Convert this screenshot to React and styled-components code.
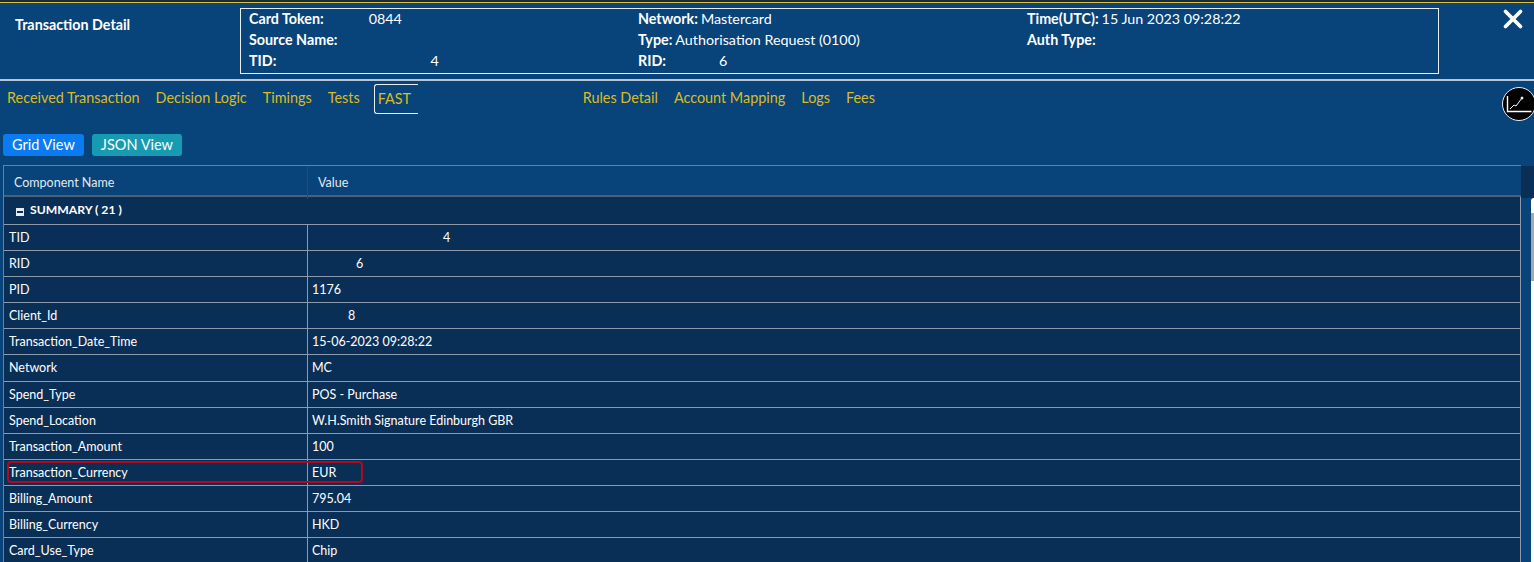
import React from "react";
import styled, { createGlobalStyle } from "styled-components";
import { X } from "lucide-react";

const GlobalStyle = createGlobalStyle`
  html, body {
    margin: 0;
    height: 100%;
    overflow: hidden;
    background: #08437a;
  }

  * {
    box-sizing: border-box;
  }
`;

const Page = styled.div`
  width: 1534px;
  height: 562px;
  overflow: hidden;
  background: #08437a;
  color: #ffffff;
  font-family: "Lato", "Open Sans", sans-serif;
`;

const TopStrip = styled.div`
  height: 3px;
  background: #1a2a3a;
  border-bottom: 1px solid #d9c23a;
`;

const Header = styled.header`
  height: 78px;
  display: flex;
  align-items: flex-start;
  padding: 5px 0 0 15px;
  border-bottom: 2px solid #b9c6d6;
`;

const Title = styled.h1`
  width: 225px;
  margin: 8px 0 0;
  font-size: 14.3px;
  font-weight: 700;
`;

const InfoBox = styled.div`
  width: 1199px;
  height: 66px;
  padding: 0 0 0 8px;
  border: 1px solid #e8eef4;
  display: grid;
  grid-template-columns: repeat(3, 389px);
  grid-auto-rows: 21px;
  font-size: 14.3px;
  line-height: 19px;
`;

const InfoItem = styled.div`
  white-space: nowrap;

  b {
    font-weight: 700;
  }
`;

const InfoValue = styled.span`
  padding-left: ${(p) => p.$gap || 3}px;
`;

const CloseButton = styled.button`
  margin: -2px 0 0 auto;
  width: 40px;
  height: 26px;
  padding: 0 3px 0 0;
  background: none;
  border: none;
  color: #ffffff;
  display: flex;
  justify-content: center;
  align-items: center;
`;

const Nav = styled.nav`
  height: 53px;
  display: flex;
  align-items: flex-start;
  padding: 3px 0 0 7px;
  position: relative;
`;

const Tab = styled.a`
  height: 30px;
  line-height: 28px;
  margin-right: 16px;
  color: #dcbc22;
  font-size: 14.4px;
  white-space: nowrap;
`;

const ActiveTab = styled(Tab)`
  width: 44px;
  margin-left: -2px;
  margin-right: 165px;
  padding-left: 3px;
  border: 1px solid #e8eef4;
  border-right: none;
  border-radius: 3px 0 0 3px;
  overflow: hidden;
`;

const ChartButton = styled.div`
  position: absolute;
  top: 6px;
  left: 1502px;
  width: 34px;
  height: 34px;
  border-radius: 50%;
  background: #000000;
  border: 1px solid #e8eef4;
  display: flex;
  align-items: center;
  justify-content: center;
`;

const ViewBar = styled.div`
  height: 31px;
  display: flex;
  align-items: flex-start;
  gap: 8px;
  padding-left: 3px;
`;

const ViewButton = styled.button`
  height: 22px;
  padding: 0 9px;
  border: none;
  border-radius: 3px;
  background: ${(p) => (p.$active ? "#0a7bf0" : "#179bb3")};
  color: #ffffff;
  font-family: inherit;
  font-size: 14.5px;
  line-height: 22px;
`;

const TableArea = styled.div`
  display: grid;
  grid-template-columns: 1518px 13px;
  margin-left: 3px;
`;

const Table = styled.div`
  border-left: 1px solid #6f7f92;
  border-top: 1px solid #6f7f92;
  font-size: 12.5px;
`;

const HeadRow = styled.div`
  height: 31px;
  display: grid;
  grid-template-columns: 304px 1fr;
  align-items: center;
  border-bottom: 2px solid #4d5f73;
  background: #08437a;
`;

const HeadCell = styled.div`
  height: 100%;
  padding-left: 10px;
  line-height: 33px;
  color: #e3e9ef;
  border-right: ${(p) => (p.$first ? "1px solid #2f4a68" : "none")};
`;

const Body = styled.div`
  background: #0a2f57;
  border-right: 1px solid #8c9aab;
`;

const GroupRow = styled.div`
  height: 28px;
  padding: 0 0 3px 12px;
  display: flex;
  align-items: center;
  gap: 6px;
  font-size: 12.2px;
  font-weight: 700;
  border-bottom: 1px solid #8c9aab;
`;

const Collapse = styled.span`
  width: 8px;
  height: 8px;
  margin-top: 6px;
  background: #e8eef4;
  display: flex;
  align-items: center;
  justify-content: center;

  &::after {
    content: "";
    width: 6px;
    height: 2px;
    background: #0a2f57;
  }
`;

const Row = styled.div`
  height: 26.1px;
  display: grid;
  grid-template-columns: 304px 1fr;
  position: relative;
  border-bottom: 1px solid #8c9aab;
  line-height: 25px;
`;

const NameCell = styled.div`
  padding-left: 5px;
  border-right: 1px solid #8c9aab;
`;

const ValueCell = styled.div`
  padding-left: ${(p) => p.$gap || 4}px;
`;

const Highlight = styled.div`
  position: absolute;
  left: 3px;
  top: 1px;
  width: 356px;
  height: 22px;
  border: 2px solid #b5081c;
  border-radius: 4px;
  pointer-events: none;
`;

const Side = styled.div`
  display: flex;
  flex-direction: column;
`;

const SideHead = styled.div`
  height: 32px;
  margin-top: 1px;
  background: #0a2f57;
`;

const Scrollbar = styled.div`
  flex: 1;
  margin-left: 10px;
  background: #ffffff;
  border-radius: 3px 0 0 0;
  padding-top: 15px;
`;

const Thumb = styled.div`
  height: 68px;
  background: #a9a9a9;
`;

const info = [
  { label: "Card Token:", value: "0844", gap: 45 },
  { label: "Network:", value: "Mastercard" },
  { label: "Time(UTC):", value: "15 Jun 2023 09:28:22" },
  { label: "Source Name:" },
  { label: "Type:", value: "Authorisation Request (0100)" },
  { label: "Auth Type:" },
  { label: "TID:", value: "4", gap: 154 },
  { label: "RID:", value: "6", gap: 53 },
];

const tabs = ["Received Transaction", "Decision Logic", "Timings", "Tests"];
const moreTabs = ["Rules Detail", "Account Mapping", "Logs", "Fees"];

const rows = [
  { name: "TID", value: "4", gap: 135 },
  { name: "RID", value: "6", gap: 48 },
  { name: "PID", value: "1176" },
  { name: "Client_Id", value: "8", gap: 40 },
  { name: "Transaction_Date_Time", value: "15-06-2023 09:28:22" },
  { name: "Network", value: "MC" },
  { name: "Spend_Type", value: "POS - Purchase" },
  { name: "Spend_Location", value: "W.H.Smith Signature Edinburgh GBR" },
  { name: "Transaction_Amount", value: "100" },
  { name: "Transaction_Currency", value: "EUR", marked: true },
  { name: "Billing_Amount", value: "795.04" },
  { name: "Billing_Currency", value: "HKD" },
  { name: "Card_Use_Type", value: "Chip" },
];

export default function App() {
  return (
    <Page>
      <GlobalStyle />
      <TopStrip />
      <Header>
        <Title>Transaction Detail</Title>
        <InfoBox>
          {info.map((item) => (
            <InfoItem key={item.label}>
              <b>{item.label}</b>
              {item.value && <InfoValue $gap={item.gap}>{item.value}</InfoValue>}
            </InfoItem>
          ))}
        </InfoBox>
        <CloseButton aria-label="Close">
          <X size={30} strokeWidth={3} />
        </CloseButton>
      </Header>
      <Nav>
        {tabs.map((t) => (
          <Tab key={t}>{t}</Tab>
        ))}
        <ActiveTab>FAST</ActiveTab>
        {moreTabs.map((t) => (
          <Tab key={t}>{t}</Tab>
        ))}
        <ChartButton>
          <svg width="26" height="26" viewBox="0 0 26 26" fill="none" stroke="#ffffff">
            <path d="M1.5 5v15.5h24" strokeWidth="1.4" />
            <path d="M4 18l4-4 2 1 6-8" strokeWidth="1" />
            <circle cx="16" cy="7" r="1" fill="#ffffff" />
          </svg>
        </ChartButton>
      </Nav>
      <ViewBar>
        <ViewButton $active>Grid View</ViewButton>
        <ViewButton>JSON View</ViewButton>
      </ViewBar>
      <TableArea>
        <Table>
          <HeadRow>
            <HeadCell $first>Component Name</HeadCell>
            <HeadCell>Value</HeadCell>
          </HeadRow>
          <Body>
            <GroupRow>
              <Collapse />
              SUMMARY ( 21 )
            </GroupRow>
            {rows.map((r) => (
              <Row key={r.name}>
                <NameCell>{r.name}</NameCell>
                <ValueCell $gap={r.gap}>{r.value}</ValueCell>
                {r.marked && <Highlight />}
              </Row>
            ))}
          </Body>
        </Table>
        <Side>
          <SideHead />
          <Scrollbar>
            <Thumb />
          </Scrollbar>
        </Side>
      </TableArea>
    </Page>
  );
}
